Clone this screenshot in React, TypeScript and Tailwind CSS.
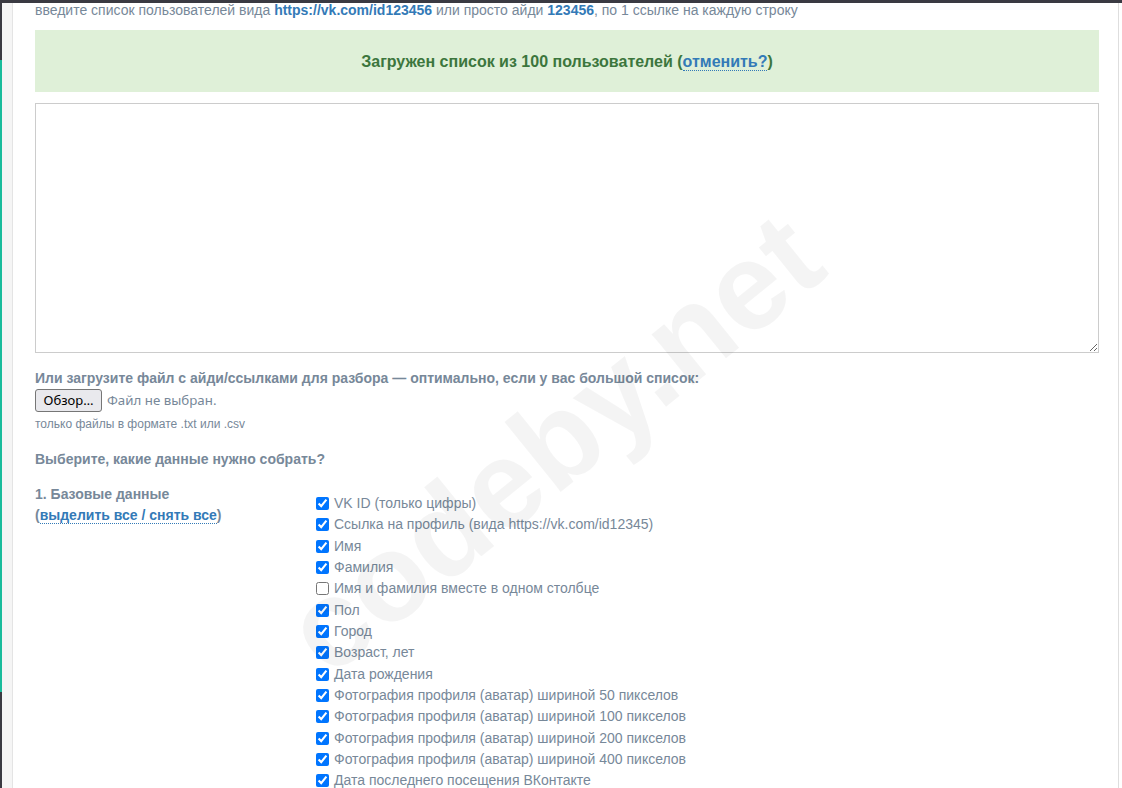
import React from 'react';

const baseFields = [
  { label: 'VK ID (только цифры)', checked: true },
  { label: 'Ссылка на профиль (вида https://vk.com/id12345)', checked: true },
  { label: 'Имя', checked: true },
  { label: 'Фамилия', checked: true },
  { label: 'Имя и фамилия вместе в одном столбце', checked: false },
  { label: 'Пол', checked: true },
  { label: 'Город', checked: true },
  { label: 'Возраст, лет', checked: true },
  { label: 'Дата рождения', checked: true },
  { label: 'Фотография профиля (аватар) шириной 50 пикселов', checked: true },
  { label: 'Фотография профиля (аватар) шириной 100 пикселов', checked: true },
  { label: 'Фотография профиля (аватар) шириной 200 пикселов', checked: true },
  { label: 'Фотография профиля (аватар) шириной 400 пикселов', checked: true },
  { label: 'Дата последнего посещения ВКонтакте', checked: true },
  { label: 'Статус', checked: true },
];

export default function App() {
  return (
    <div
      className="flex h-[788px] flex-col overflow-hidden bg-white text-[14px] text-[#778899]"
      style={{ fontFamily: '"Liberation Sans", Arial, sans-serif' }}
    >
      <div className="relative z-20 h-[3px] shrink-0 bg-[#3a3a42]" />
      <div className="flex min-h-0 flex-1">
        {/* sidebar edge */}
        <div className="flex w-[2px] shrink-0 flex-col">
          <div className="h-[57px] bg-[#3a3a42]" />
          <div className="h-[632px] bg-[#1abc9c]" />
          <div className="flex-1 bg-[#3a3a42]" />
        </div>
        <div className="w-[11px] shrink-0 border-r border-[#e4e4e4] bg-[#f5f5f5]" />

        <main className="relative min-w-0 flex-1 overflow-hidden pl-[22px] pr-[19px]">
          <p className="-mt-[3px] mb-[10px] leading-[20px] whitespace-nowrap">
            введите список пользователей вида{' '}
            <b className="text-[#337ab7]">https://vk.com/id123456</b> или просто айди{' '}
            <b className="text-[#337ab7]">123456</b>, по 1 ссылке на каждую строку
          </p>

          <div className="bg-[#dff0d8] pt-[21px] pb-[19px] text-center text-[16px] font-bold leading-[22px] text-[#3c763d]">
            Загружен список из 100 пользователей (
            <a href="#" className="border-b border-dotted border-[#337ab7] text-[#337ab7]">
              отменить?
            </a>
            )
          </div>

          <textarea
            className="mt-[11px] block h-[250px] w-full border border-[#cccccc] bg-white outline-none"
            defaultValue=""
          />

          <p className="mt-[15px] font-bold leading-[20px]">
            Или загрузите файл с айди/ссылками для разбора — оптимально, если у вас большой список:
          </p>
          <div
            className="mt-[1px] flex items-center gap-[5px]"
            style={{ fontFamily: '"Noto Sans", "DejaVu Sans", sans-serif' }}
          >
            <button
              type="button"
              className="h-[23px] w-[67px] rounded-[3px] border border-[#767676] bg-[#e9e9ed] text-[13px] text-black"
            >
              Обзор…
            </button>
            <span className="text-[13.3px]">Файл не выбран.</span>
          </div>
          <p className="mt-[4px] text-[12px] leading-[17px]">только файлы в формате .txt или .csv</p>

          <p className="mt-[16px] font-bold leading-[20px]">Выберите, какие данные нужно собрать?</p>

          <div className="mt-[15px] flex">
            <div className="w-[281px] shrink-0 font-bold leading-[21px]">
              <div>1. Базовые данные</div>
              <div>
                (
                <a href="#" className="border-b border-dotted border-[#337ab7] text-[#337ab7]">
                  выделить все / снять все
                </a>
                )
              </div>
            </div>
            <div className="mt-[9px] flex flex-col">
              {baseFields.map((f) => (
                <label key={f.label} className="flex h-[21.33px] items-center">
                  <input
                    type="checkbox"
                    defaultChecked={f.checked}
                    className="m-0 mr-[5px] h-[13px] w-[13px]"
                  />
                  <span>{f.label}</span>
                </label>
              ))}
            </div>
          </div>

          {/* watermark */}
          <div className="pointer-events-none absolute left-[540px] top-[440px] -translate-x-1/2 -translate-y-1/2 -rotate-[39deg] whitespace-nowrap text-[124px] font-bold leading-none text-black/[0.045]">
            codeby.net
          </div>
        </main>

        <div className="w-[1px] shrink-0 bg-[#dedede]" />
        <div className="w-[3px] shrink-0 bg-white" />
      </div>
    </div>
  );
}
